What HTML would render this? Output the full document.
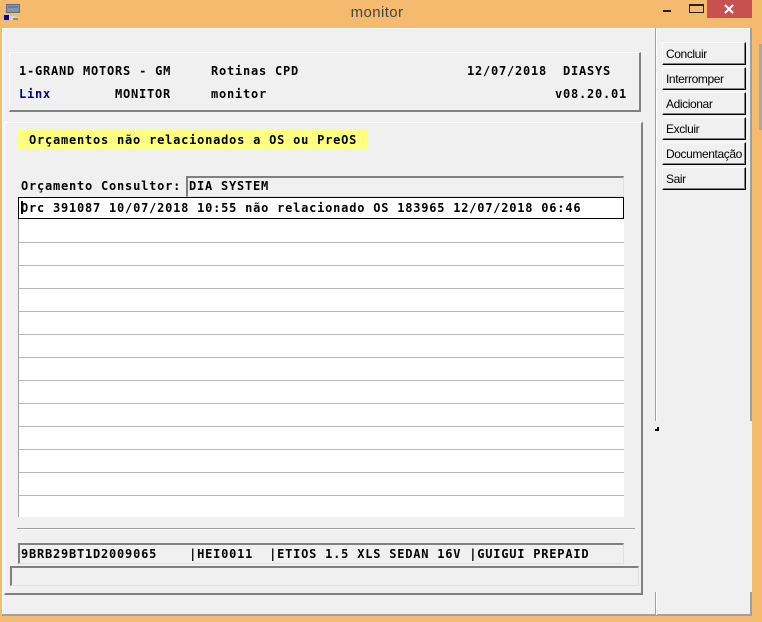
<!DOCTYPE html>
<html><head><meta charset="utf-8">
<style>
html,body{margin:0;padding:0;width:762px;height:622px;overflow:hidden;background:#F4BB6F}
div{position:absolute;box-sizing:border-box}
.t{font:bold 12px/16px "DejaVu Sans Mono","Liberation Mono",monospace;letter-spacing:.78px;color:#000;white-space:pre;height:16px}
.b{left:662px;width:84px;height:23px;background:#f0f0f0;border-top:1px solid #fff;border-left:1px solid #fff;border-right:1px solid #000;border-bottom:1px solid #000;font:12px/23px "Liberation Sans",sans-serif;letter-spacing:-.4px;color:#000;padding-left:3px;box-shadow:inset -1px -1px 0 #808080;white-space:nowrap}
.l{left:19px;width:605px;height:1px;background:#b9b9b9}
</style></head><body>
<div style="left:0;top:0;width:762px;height:622px;background:#F4BB6F"></div>
<!-- title -->
<div style="left:0;top:5px;width:754px;text-align:center;font:15px/16px 'Liberation Sans',sans-serif;letter-spacing:.4px;color:#444">monitor</div>
<svg style="position:absolute;left:0;top:0" width="30" height="24">
<rect x="6.5" y="4.5" width="13" height="8" fill="#8494a8" stroke="#5c6c84" stroke-width="1"/>
<rect x="8" y="6" width="10" height="2" fill="#6878b0"/>
<rect x="4" y="15" width="5" height="5" fill="#0000c0"/>
<path d="M9 16h5l4 2-3 2H9z" fill="#d8d8d8"/>
<path d="M13 19h5" stroke="#404040"/>
</svg>
<div style="left:663px;top:10px;width:8px;height:2px;background:#222"></div>
<div style="left:689px;top:4px;width:15px;height:9px;border:1px solid #222;border-top:2px solid #222"></div>
<div style="left:707px;top:0;width:45px;height:18px;background:#C75050"></div>
<svg style="position:absolute;left:707px;top:0" width="45" height="18"><path d="M18 5l8 8M26 5l-8 8" stroke="#fff" stroke-width="2"/></svg>
<!-- client -->
<div style="left:2px;top:28px;width:750px;height:588px;background:#f0f0f0;border-top:1px solid #fff;border-left:1px solid #fff"></div>
<div style="left:656px;top:421px;width:95px;height:172px;background:#f0f0f0"></div>
<div style="left:750px;top:28px;width:2px;height:393px;background:#a0a0a0"></div>
<div style="left:750px;top:592px;width:2px;height:24px;background:#a0a0a0"></div>
<div style="left:2px;top:614px;width:750px;height:2px;background:#a0a0a0"></div>
<div style="left:759px;top:44px;width:3px;height:86px;background:#a8a8a8"></div>
<!-- splitter -->
<div style="left:655px;top:28px;width:1px;height:393px;background:#a0a0a0"></div>
<div style="left:656px;top:28px;width:1px;height:393px;background:#fff"></div>
<div style="left:655px;top:592px;width:1px;height:23px;background:#a0a0a0"></div>
<div style="left:656px;top:592px;width:1px;height:23px;background:#fff"></div>
<div style="left:655px;top:427px;width:4px;height:4px;background:#000"></div>
<div style="left:655px;top:427px;width:2px;height:2px;background:#f0f0f0"></div>
<!-- header panel -->
<div style="left:9px;top:52px;width:632px;height:60px;background:#f0f0f0;border-top:1px solid #fff;border-left:1px solid #fff;border-right:2px solid #808080;border-bottom:2px solid #808080"></div>
<div class="t" style="left:19px;top:63px">1-GRAND MOTORS - GM</div>
<div class="t" style="left:211px;top:63px">Rotinas CPD</div>
<div class="t" style="left:467px;top:63px">12/07/2018</div>
<div class="t" style="left:563px;top:63px">DIASYS</div>
<div class="t" style="left:19px;top:86px;color:#000080">Linx</div>
<div class="t" style="left:115px;top:86px">MONITOR</div>
<div class="t" style="left:211px;top:86px">monitor</div>
<div class="t" style="left:555px;top:86px">v08.20.01</div>
<!-- main panel -->
<div style="left:4px;top:122px;width:639px;height:473px;background:#f0f0f0;border-top:1px solid #fff;border-left:1px solid #fff;border-right:2px solid #808080;border-bottom:2px solid #808080"></div>
<div style="left:18px;top:130px;width:350px;height:20px;background:#FFFF80"></div>
<div class="t" style="left:29px;top:132px">Orçamentos não relacionados a OS ou PreOS</div>
<div class="t" style="left:21px;top:178px">Orçamento Consultor:</div>
<div style="left:186px;top:176px;width:438px;height:21px;background:#f0f0f0;border-top:2px solid #808080;border-left:2px solid #808080;border-right:1px solid #e0e0e0;border-bottom:1px solid #e0e0e0"></div>
<div class="t" style="left:189px;top:178px">DIA SYSTEM</div>
<!-- grid -->
<div style="left:18px;top:197px;width:606px;height:320px;background:#fff"></div>
<div style="left:18px;top:219px;width:1px;height:298px;background:#a0a0a0"></div>
<div class="l" style="top:242px"></div><div class="l" style="top:265px"></div><div class="l" style="top:288px"></div><div class="l" style="top:311px"></div><div class="l" style="top:334px"></div><div class="l" style="top:357px"></div><div class="l" style="top:380px"></div><div class="l" style="top:403px"></div><div class="l" style="top:426px"></div><div class="l" style="top:449px"></div><div class="l" style="top:472px"></div><div class="l" style="top:495px"></div>
<div style="left:18px;top:197px;width:606px;height:22px;border:1px solid #000;background:#fff"></div>
<div class="t" style="left:21px;top:200px">Orc 391087 10/07/2018 10:55 não relacionado OS 183965 12/07/2018 06:46</div>
<div style="left:21px;top:201px;width:2px;height:13px;background:#000"></div>
<!-- divider -->
<div style="left:17px;top:528px;width:618px;height:1px;background:#a0a0a0"></div>
<div style="left:17px;top:529px;width:618px;height:1px;background:#fff"></div>
<!-- bottom fields -->
<div style="left:18px;top:543px;width:606px;height:21px;background:#f0f0f0;border-top:2px solid #808080;border-left:2px solid #808080;border-right:1px solid #e0e0e0;border-bottom:1px solid #e0e0e0"></div>
<div class="t" style="left:21px;top:546px">9BRB29BT1D2009065    |HEI0011  |ETIOS 1.5 XLS SEDAN 16V |GUIGUI PREPAID</div>
<div style="left:10px;top:566px;width:629px;height:20px;background:#f0f0f0;border-top:2px solid #808080;border-left:2px solid #808080;border-right:1px solid #e0e0e0;border-bottom:1px solid #e0e0e0"></div>
<!-- buttons -->
<div class="b" style="top:42px">Concluir</div>
<div class="b" style="top:67px">Interromper</div>
<div class="b" style="top:92px">Adicionar</div>
<div class="b" style="top:117px">Excluir</div>
<div class="b" style="top:142px">Documentação</div>
<div class="b" style="top:167px">Sair</div>
</body></html>
